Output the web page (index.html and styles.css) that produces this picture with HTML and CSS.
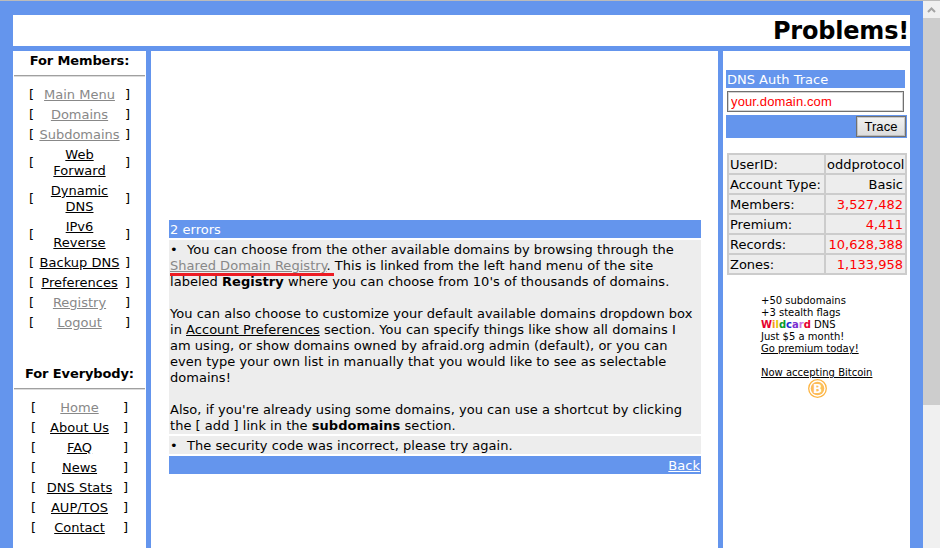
FILE: index.html
```html
<!DOCTYPE html>
<html lang="en">
<head>
<meta charset="utf-8">
<title>Problems!</title>
<link rel="stylesheet" href="styles.css">
</head>
<body>
<div class="page">
  <header class="title">Problems!</header>
  <div class="columns">
    <nav class="side">
      <h2 class="side-head">For Members:</h2>
      <hr class="rule">
      <ul class="menu">
        <li><span>[</span><a class="seen" href="#">Main Menu</a><span>]</span></li>
        <li><span>[</span><a class="seen" href="#">Domains</a><span>]</span></li>
        <li><span>[</span><a class="seen" href="#">Subdomains</a><span>]</span></li>
        <li><span>[</span><a href="#">Web Forward</a><span>]</span></li>
        <li><span>[</span><a href="#">Dynamic DNS</a><span>]</span></li>
        <li><span>[</span><a href="#">IPv6 Reverse</a><span>]</span></li>
        <li><span>[</span><a href="#">Backup DNS</a><span>]</span></li>
        <li><span>[</span><a href="#">Preferences</a><span>]</span></li>
        <li><span>[</span><a class="seen" href="#">Registry</a><span>]</span></li>
        <li><span>[</span><a class="seen" href="#">Logout</a><span>]</span></li>
      </ul>
      <h2 class="side-head second">For Everybody:</h2>
      <hr class="rule">
      <ul class="menu everybody">
        <li><span>[</span><a class="seen" href="#">Home</a><span>]</span></li>
        <li><span>[</span><a href="#">About Us</a><span>]</span></li>
        <li><span>[</span><a href="#">FAQ</a><span>]</span></li>
        <li><span>[</span><a href="#">News</a><span>]</span></li>
        <li><span>[</span><a href="#">DNS Stats</a><span>]</span></li>
        <li><span>[</span><a href="#">AUP/TOS</a><span>]</span></li>
        <li><span>[</span><a href="#">Contact</a><span>]</span></li>
      </ul>
    </nav>
    <main class="center">
      <div class="errors">
        <div class="bar">2 errors</div>
        <div class="msg"><span class="dot">•</span>You can choose from the other available domains by browsing through the<br>
          <span class="marked"><a class="seen" href="#">Shared Domain Registry</a>.</span> This is linked from the left hand menu of the site<br>
          labeled <b>Registry</b> where you can choose from 10's of thousands of domains.<br><br>
          You can also choose to customize your default available domains dropdown box<br>
          in <a href="#">Account Preferences</a> section. You can specify things like show all domains I<br>
          am using, or show domains owned by afraid.org admin (default), or you can<br>
          even type your own list in manually that you would like to see as selectable<br>
          domains!<br><br>
          Also, if you're already using some domains, you can use a shortcut by clicking<br>
          the [ add ] link in the <b>subdomains</b> section.</div>
        <div class="msg"><span class="dot">•</span>The security code was incorrect, please try again.</div>
        <div class="bar back"><a href="#">Back</a></div>
      </div>
    </main>
    <aside class="right">
      <div class="trace-head">DNS Auth Trace</div>
      <input class="trace-input" type="text" value="your.domain.com">
      <div class="trace-foot"><button class="trace-btn" type="button">Trace</button></div>
      <div class="stats">
        <div>UserID:</div><div class="val">oddprotocol</div>
        <div>Account Type:</div><div class="val">Basic</div>
        <div>Members:</div><div class="val red">3,527,482</div>
        <div>Premium:</div><div class="val red">4,411</div>
        <div>Records:</div><div class="val red">10,628,388</div>
        <div>Zones:</div><div class="val red">1,133,958</div>
      </div>
      <div class="promo">
        +50 subdomains<br>
        +3 stealth flags<br>
        <b class="wild"><i class="c1">W</i><i class="c2">i</i><i class="c3">l</i><i class="c4">d</i><i class="c5">c</i><i class="c6">a</i><i class="c7">r</i><i class="c8">d</i></b> DNS<br>
        Just $5 a month!<br>
        <a href="#">Go premium today!</a><br><br>
        <a href="#">Now accepting Bitcoin</a>
        <svg class="btc" width="19" height="19" viewBox="0 0 19 19" aria-hidden="true">
          <circle cx="9.5" cy="9.5" r="8.8" fill="#fff" stroke="#fdb543" stroke-width="1.3"/>
          <circle cx="9.5" cy="9.5" r="6.8" fill="#fdbd5b"/>
          <text x="9.5" y="13.5" text-anchor="middle" class="btc-b">B</text>
        </svg>
      </div>
    </aside>
  </div>
</div>
<div class="scrollbar">
  <div class="sb-btn"><svg width="9" height="6" viewBox="0 0 9 6" aria-hidden="true"><path d="M1 5 L4.5 1.5 L8 5" fill="none" stroke="#a3a3a3" stroke-width="2"/></svg></div>
  <div class="sb-thumb"></div>
</div>
</body>
</html>
```
FILE: styles.css
```css
html, body { margin: 0; padding: 0; height: 100%; overflow: hidden; }
body {
  display: flex;
  font: 13px/16px "DejaVu Sans", Verdana, sans-serif;
  color: #000;
  background: #fff;
  border-top: 1px solid #bbb;
  box-sizing: border-box;
}
a { color: #000; text-decoration: underline; }
a.seen { color: #888; }
.page {
  flex: 1;
  background: #6495ed;
  padding: 14px 13px 0;
  display: flex;
  flex-direction: column;
  gap: 5px;
  min-width: 0;
}
.title {
  background: #fff;
  height: 31px;
  text-align: right;
  font-size: 24px;
  letter-spacing: -.2px;
  line-height: 33px;
  font-weight: bold;
  padding-right: 1px;
  overflow: hidden;
}
.columns {
  flex: 1;
  display: grid;
  grid-template-columns: 133px 567px 187px;
  gap: 5px;
  min-height: 0;
}
.side { background: #fff; text-align: center; padding-top: 2px; }
.side-head { margin: 0; font-size: 13px; line-height: 16px; font-weight: bold; letter-spacing: -.12px; }
.side-head.second { margin-top: 35px; }
.rule { border: 0; border-top: 1px solid #a0a0a0; border-bottom: 1px solid #dcdcdc; height: 0; margin: 6px 1px 10px; }
.menu { list-style: none; margin: 0; padding: 0; }
.menu li {
  display: grid;
  grid-template-columns: 10px 81px 10px;
  justify-content: center;
  align-items: center;
  margin-bottom: 4px;
}
.menu li > span:first-child { text-align: left; }
.menu li > span:last-child { text-align: right; }
.menu a { text-align: center; }
.menu.everybody li { grid-template-columns: 10px 77px 10px; }
.center { background: #fff; padding: 169px 17px 0 18px; }
.errors { display: flex; flex-direction: column; gap: 2px; letter-spacing: .03px; }
.bar { background: #6495ed; color: #fff; padding: 2px 1px 0; }
.bar.back { text-align: right; }
.bar a { color: #fff; }
.msg { background: #ededed; padding: 2px 1px 0; }
.dot { display: inline-block; width: 17px; }
.marked { position: relative; }
.marked::after {
  content: "";
  position: absolute;
  left: 0;
  right: -3px;
  bottom: -3px;
  height: 3px;
  background: #ed1c24;
}
.right { background: #fff; padding: 19px 3px 0; }
.trace-head { background: #6495ed; color: #fff; padding: 2px 1px 0; width: 177px; }
.trace-input {
  display: block;
  box-sizing: border-box;
  width: 177px;
  height: 21px;
  margin: 3px 0 3px 1px;
  padding: 0 3px;
  border: 1px solid #707070;
  box-shadow: inset 0 0 0 1px rgba(112, 112, 112, .3);
  font: 13px "Liberation Sans", Arial, sans-serif;
  letter-spacing: .13px;
  color: #f00;
  background: #fff;
  border-radius: 0;
}
.trace-foot { background: #6495ed; width: 181px; height: 23px; display: flex; justify-content: flex-end; align-items: center; }
.trace-btn {
  width: 50px;
  height: 21px;
  padding: 0;
  border: 1px solid #707070;
  box-shadow: inset 0 0 0 1px rgba(112, 112, 112, .3);
  background: linear-gradient(#f2f2f2, #dcdcdc);
  font: 13px "Liberation Sans", Arial, sans-serif;
  letter-spacing: .1px;
  margin-right: 1px;
  color: #000;
}
.stats {
  margin: 15px 0 0 1px;
  width: 180px;
  box-sizing: border-box;
  background: #ccc;
  padding: 2px;
  display: grid;
  grid-template-columns: 95px 79px;
  gap: 2px;
}
.stats > div { background: #ededed; height: 18px; padding: 2px 2px 0 1px; box-sizing: border-box; white-space: nowrap; }
.stats .val { text-align: right; }
.stats .red { color: #f00; }
.promo { margin: 20px 0 0 35px; font-size: 10px; line-height: 12px; }
.btc { display: block; margin: 0 0 0 47px; }
.btc-b { font: bold 12px "DejaVu Sans", sans-serif; fill: #fff; }
.wild i { font-style: normal; }
.c1 { color: #e6002e; } .c2 { color: #f7941d; } .c3 { color: #e6c300; } .c4 { color: #0a9a2a; }
.c5 { color: #1a2fd0; } .c6 { color: #7a2fd0; } .c7 { color: #d070e0; } .c8 { color: #e6002e; }
.scrollbar { width: 17px; flex: none; background: #f0f0f0; display: flex; flex-direction: column; }
.sb-btn { height: 17px; display: flex; align-items: center; justify-content: center; }
.sb-thumb { height: 387px; background: #cdcdcd; }
```
